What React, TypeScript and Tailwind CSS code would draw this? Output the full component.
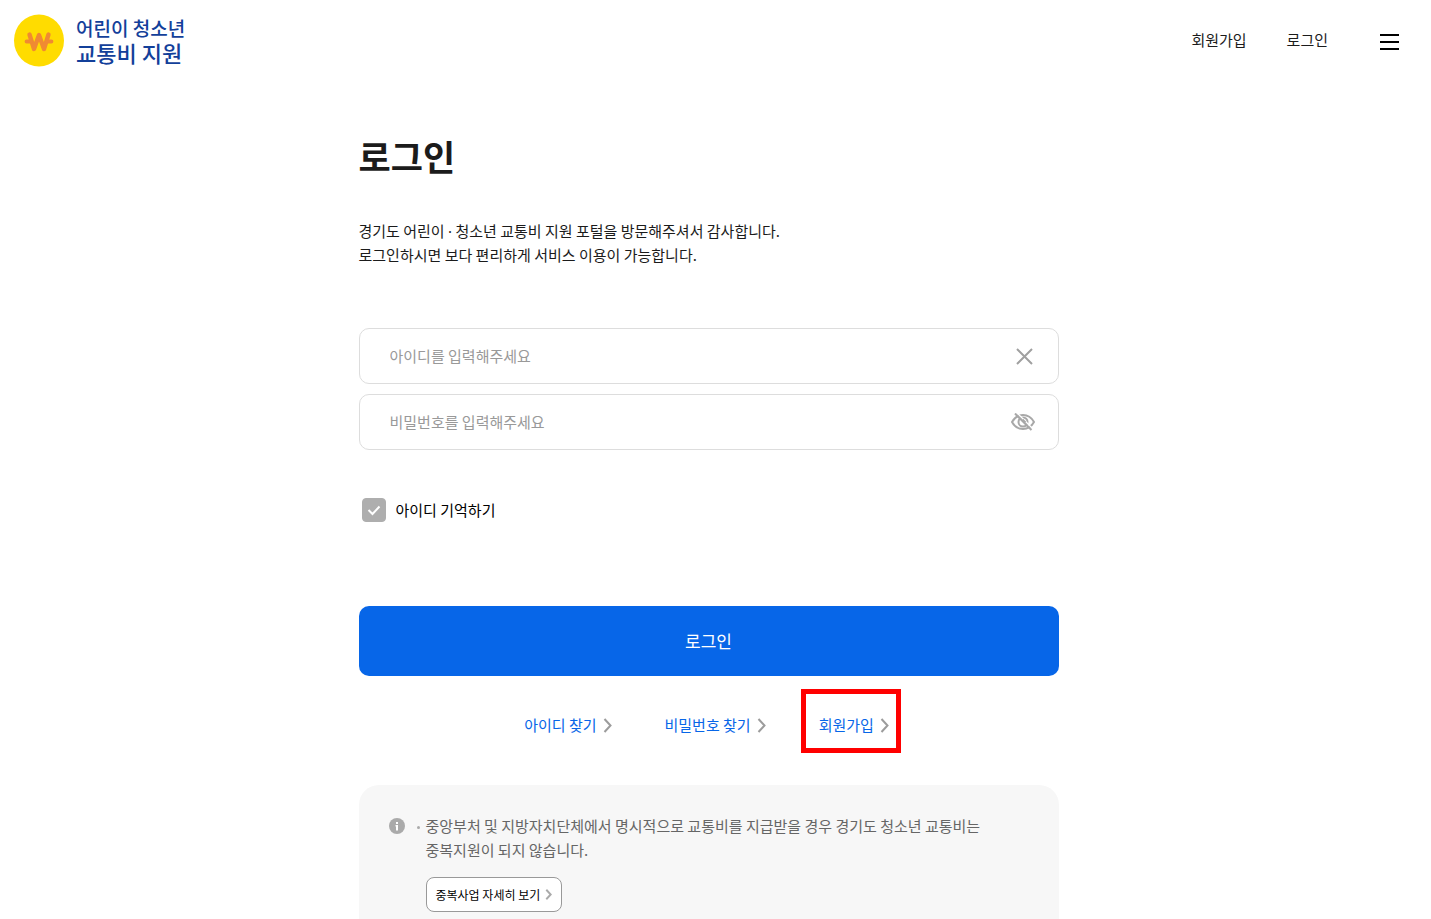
import { FunctionComponent, useState } from "react";

const helpLinks = [
  { label: "아이디 찾기", href: "#find-id", marked: false },
  { label: "비밀번호 찾기", href: "#find-password", marked: false },
  { label: "회원가입", href: "#join", marked: true },
];

const Logo: FunctionComponent = () => (
  <a href="#home" className="flex items-center gap-3 text-[#13409a]">
    <svg width="51" height="54" viewBox="0 0 51 54" aria-hidden="true">
      <ellipse cx="26" cy="27.5" rx="25" ry="26" fill="#ffdc00" />
      <g fill="none" stroke="#f08a32" strokeLinecap="round" strokeLinejoin="round">
        <path d="M16.500 21.500 L21 36 L26 22 L31 36 L35.500 21.500" strokeWidth="4.400" />
        <path d="M13.500 28.500 H18 M34 28.500 H38.500" strokeWidth="3.800" />
      </g>
    </svg>
    <span className="flex flex-col font-medium">
      <span className="text-[19px] leading-6">어린이 청소년</span>
      <span className="text-[22px] leading-6">교통비 지원</span>
    </span>
  </a>
);

const Chevron: FunctionComponent<{ small?: boolean }> = ({ small }) => (
  <svg
    width={small ? 7 : 9}
    height={small ? 11 : 15}
    viewBox="0 0 9 15"
    fill="none"
    stroke={small ? "#aaaaaa" : "#9c9c9c"}
    strokeWidth={small ? 2.6 : 2}
    aria-hidden="true"
  >
    <path d="M1.5 1 L7.5 7.5 L1.5 14" />
  </svg>
);

const EyeOff: FunctionComponent = () => (
  <svg width="24" height="18" viewBox="0 0 24 18" fill="none" stroke="#a8a8a8" strokeWidth="2" aria-hidden="true">
    <path d="M1 9 C3.500 4.500 7.500 2 12 2 C16.500 2 20.500 4.500 23 9 C20.500 13.500 16.500 16 12 16 C7.500 16 3.500 13.500 1 9 Z" />
    <circle cx="12" cy="9" r="4.500" />
    <path d="M5.500 -0.500 L21.500 15.500" stroke="#ffffff" strokeWidth="1.500" />
    <path d="M4 0.500 L20.500 17" />
    <path d="M11.500 6.500 L14.500 9.500" strokeWidth="2" />
  </svg>
);

const App: FunctionComponent = () => {
  const [userId, setUserId] = useState("");
  const [password, setPassword] = useState("");
  const [showPassword, setShowPassword] = useState(false);
  const [remember, setRemember] = useState(true);

  return (
    <div className="min-h-screen bg-white pr-[14px] font-['Noto_Sans_CJK_KR',sans-serif] text-[15px] leading-6 text-[#1b1b1b]">
      <header className="flex h-20 items-center justify-between pl-[13px] pr-[18px]">
        <Logo />
        <nav className="flex items-center">
          <a href="#join" className="mr-10">회원가입</a>
          <a href="#login" className="mr-[52px]">로그인</a>
          <button type="button" aria-label="전체 메뉴" className="mt-1 flex w-[19px] flex-col gap-[5px]">
            <span className="h-0.5 w-full bg-black" />
            <span className="h-0.5 w-full bg-black" />
            <span className="h-0.5 w-full bg-black" />
          </button>
        </nav>
      </header>

      <main className="mx-auto w-full max-w-[700px] pt-[50px]">
        <h1 className="text-[35px] font-bold leading-[52px]">로그인</h1>
        <p className="mt-[37px]">
          경기도 어린이 <span className="font-['Noto_Sans']">·</span> 청소년 교통비 지원 포털을 방문해주셔서 감사합니다.
          <br />
          로그인하시면 보다 편리하게 서비스 이용이 가능합니다.
        </p>

        <form className="mt-[61px]" onSubmit={(e) => e.preventDefault()}>
          <div className="flex h-14 items-center rounded-[10px] border border-[#dddddd] pl-[30px] pr-[25px]">
            <input
              type="text"
              aria-label="아이디"
              placeholder="아이디를 입력해주세요"
              value={userId}
              onChange={(e) => setUserId(e.target.value)}
              className="min-w-0 flex-1 outline-none placeholder:text-[#999999]"
            />
            <button type="button" aria-label="지우기" onClick={() => setUserId("")}>
              <svg width="17" height="17" viewBox="0 0 17 17" stroke="#a0a0a0" strokeWidth="2" aria-hidden="true">
                <path d="M1 1 L16 16 M16 1 L1 16" />
              </svg>
            </button>
          </div>
          <div className="mt-2.5 flex h-14 items-center rounded-[10px] border border-[#dddddd] pl-[30px] pr-[23px]">
            <input
              type={showPassword ? "text" : "password"}
              aria-label="비밀번호"
              placeholder="비밀번호를 입력해주세요"
              value={password}
              onChange={(e) => setPassword(e.target.value)}
              className="min-w-0 flex-1 outline-none placeholder:text-[#999999]"
            />
            <button type="button" aria-label="비밀번호 표시" onClick={() => setShowPassword(!showPassword)}>
              <EyeOff />
            </button>
          </div>

          <label className="ml-[3px] mt-12 flex w-fit items-center gap-2.5 text-black">
            <span className="grid size-6">
              <input
                type="checkbox"
                checked={remember}
                onChange={(e) => setRemember(e.target.checked)}
                className="peer col-start-1 row-start-1 size-6 appearance-none rounded border border-[#aeaeae] checked:bg-[#aeaeae]"
              />
              <svg
                viewBox="0 0 24 24"
                fill="none"
                stroke="#ffffff"
                strokeWidth="2"
                aria-hidden="true"
                className="pointer-events-none invisible col-start-1 row-start-1 size-6 peer-checked:visible"
              >
                <path d="M6.500 12 L10.500 16 L17.500 8.500" />
              </svg>
            </span>
            아이디 기억하기
          </label>

          <button type="submit" className="mt-[84px] h-[70px] w-full rounded-[10px] bg-[#0766e8] text-[17px] text-white">
            로그인
          </button>
        </form>

        <div className="mt-[37px] flex justify-center gap-[53px] pr-1">
          {helpLinks.map(({ label, href, marked }) => (
            <a key={label} href={href} className="relative flex items-center gap-1.5 text-[#0766e8]">
              {label}
              <Chevron />
              {marked && (
                <span className="pointer-events-none absolute -bottom-4 -left-[18px] -right-3 -top-6 border-[5px] border-[#ff0000]" />
              )}
            </a>
          ))}
        </div>

        <section className="mt-12 flex items-start rounded-t-[20px] bg-[#f7f7f7] px-[30px] pb-8 pt-[29px] text-[#666666]">
          <svg width="16" height="16" viewBox="0 0 16 16" className="mt-1 shrink-0" aria-hidden="true">
            <circle cx="8" cy="8" r="8" fill="#aaaaaa" />
            <path d="M7 4 h2 v2 h-2 Z M6.500 7 h2.500 v5.500 h-2 v-4 h-0.500 Z" fill="#ffffff" />
          </svg>
          <span className="ml-3 mt-3 size-[3px] shrink-0 rounded-full bg-[#aaaaaa]" />
          <div className="ml-1.5">
            <p>
              중앙부처 및 지방자치단체에서 명시적으로 교통비를 지급받을 경우 경기도 청소년 교통비는
              <br />
              중복지원이 되지 않습니다.
            </p>
            <button
              type="button"
              className="mt-[15px] flex h-[35px] items-center gap-[5px] rounded-lg border border-[#999999] bg-white px-[9px] text-xs text-black"
            >
              중복사업 자세히 보기
              <Chevron small />
            </button>
          </div>
        </section>
      </main>
    </div>
  );
};

export default App;
